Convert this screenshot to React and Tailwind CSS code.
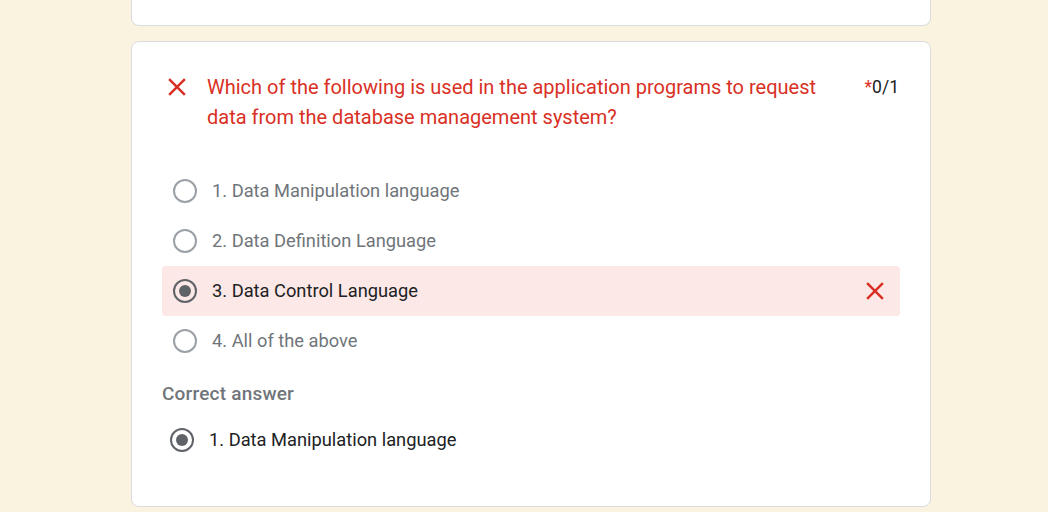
import React from "react";

const CloseIcon = ({ className }) => (
  <svg viewBox="0 0 24 24" className={className} fill="currentColor">
    <path d="M19 6.41L17.59 5 12 10.59 6.41 5 5 6.41 10.59 12 5 17.59 6.41 19 12 13.41 17.59 19 19 17.59 13.41 12z" />
  </svg>
);

const Radio = ({ checked }) => (
  <div
    className={`w-6 h-6 rounded-full border-2 flex items-center justify-center shrink-0 ${
      checked ? "border-[#5f6368]" : "border-[#9aa0a6]"
    }`}
  >
    {checked && <div className="w-3 h-3 rounded-full bg-[#5f6368]" />}
  </div>
);

const options = [
  { id: 1, text: "1. Data Manipulation language" },
  { id: 2, text: "2. Data Definition Language" },
  { id: 3, text: "3. Data Control Language", selected: true },
  { id: 4, text: "4. All of the above" },
];

export default function App() {
  return (
    <div
      className="w-[1048px] h-[512px] overflow-hidden bg-[#faf3df] flex flex-col items-center"
      style={{ fontFamily: "Roboto, 'Liberation Sans', sans-serif" }}
    >
      {/* previous card, cut off at the top */}
      <div className="w-[800px] h-[26px] shrink-0 bg-white border-x border-b border-[#dadce0] rounded-b-lg ml-[14px]" />

      {/* question card */}
      <div className="w-[800px] shrink-0 mt-[15px] ml-[14px] bg-white border border-[#dadce0] rounded-lg pt-[30px] pb-[42px] px-[30px]">
        {/* title */}
        <div className="flex items-start">
          <CloseIcon className="w-[30px] h-[30px] text-[#d93025] shrink-0" />
          <div className="flex-1 pl-[15px] pr-6 text-[20px] leading-[30px] text-[#d93025]">
            Which of the following is used in the application programs to request data from the
            database management system?
          </div>
          <div className="text-[17.5px] leading-[30px] text-[#202124] pr-[1px]">
            <span className="text-[#d93025]">*</span>0/1
          </div>
        </div>

        {/* options */}
        <div className="mt-[34px] flex flex-col">
          {options.map((opt) => (
            <div
              key={opt.id}
              className={`h-[50px] flex items-center pl-[11px] pr-[10px] rounded ${
                opt.selected ? "bg-[#fce8e6]" : ""
              }`}
            >
              <Radio checked={opt.selected} />
              <span
                className={`flex-1 pl-[15px] text-[18.3px] ${
                  opt.selected ? "text-[#202124]" : "text-[#70757a]"
                }`}
              >
                {opt.text}
              </span>
              {opt.selected && <CloseIcon className="w-[30px] h-[30px] text-[#d93025]" />}
            </div>
          ))}
        </div>

        {/* correct answer */}
        <div className="mt-4 text-[19px] leading-6 font-medium text-[#70757a] tracking-[0.2px]">
          Correct answer
        </div>
        <div className="h-12 mt-[10px] flex items-center pl-[8px]">
          <Radio checked />
          <span className="pl-[15px] text-[18.3px] text-[#202124]">1. Data Manipulation language</span>
        </div>
      </div>
    </div>
  );
}
